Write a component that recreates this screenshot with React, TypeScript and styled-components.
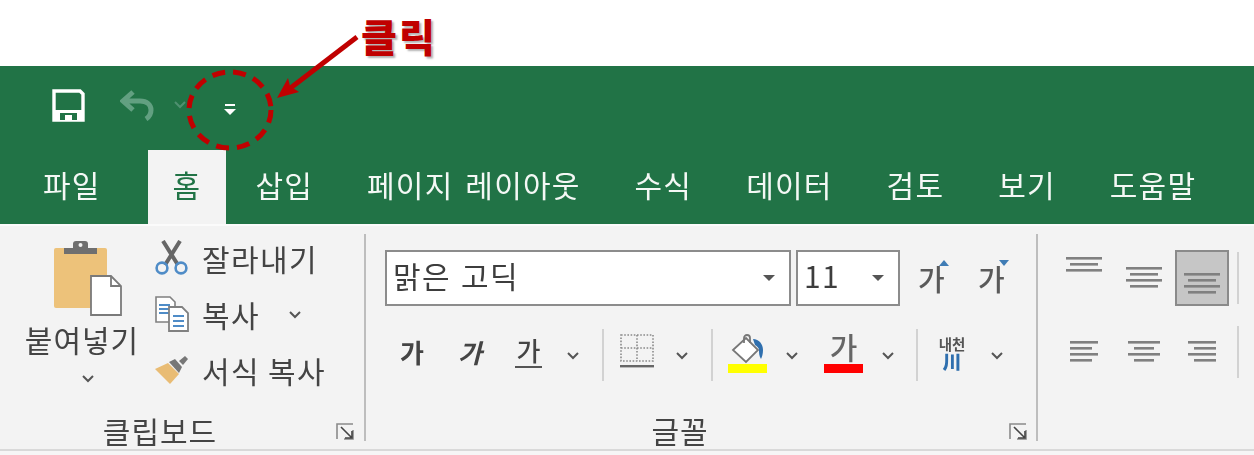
import styled, { createGlobalStyle } from 'styled-components';

const GlobalStyle = createGlobalStyle`
  html, body {
    margin: 0;
    padding: 0;
    background: #ffffff;
  }
  body {
    font-family: "Noto Sans CJK KR", "Noto Sans", sans-serif;
    color: #444444;
  }
`;

const Page = styled.div`
  position: relative;
  width: 1254px;
  height: 455px;
  overflow: hidden;
  background: #fff;
`;

const Blurred = styled.div`
  filter: blur(0.7px);
`;

const TopGap = styled.div`
  height: 66px;
`;

const TitleBar = styled.div`
  height: 84px;
  background: #217346;
  display: flex;
  align-items: center;
  padding-left: 52px;
  box-sizing: border-box;
  padding-bottom: 6px;
`;

const QatSlot = styled.div<{ $width: number; $drop?: number }>`
  width: ${(p) => p.$width}px;
  display: flex;
  align-items: center;
  margin-top: ${(p) => p.$drop ?? 0}px;
`;

const TabBar = styled.div`
  height: 74px;
  background: #217346;
  display: flex;
  align-items: stretch;
  gap: 4px;
  padding-left: 18px;
  box-sizing: border-box;
`;

const Tab = styled.div<{ $active?: boolean }>`
  padding: 0 25px 6px;
  margin-left: ${(p) => (p.$active ? '18px' : '0')};
  display: flex;
  align-items: center;
  justify-content: center;
  font-size: 30px;
  line-height: 1;
  letter-spacing: 1.2px;
  word-spacing: 4px;
  white-space: nowrap;
  color: ${(p) => (p.$active ? '#217346' : '#f4f8f5')};
  background: ${(p) => (p.$active ? '#f3f3f3' : 'transparent')};
`;

const Ribbon = styled.div`
  height: 231px;
  background: #f3f3f3;
  border-top: 2px solid #fbfbfb;
  box-sizing: border-box;
  display: flex;
  box-shadow: inset 0 -4px 0 #f6f6f6, inset 0 -6px 0 #d9d9d9;
`;

const Group = styled.div<{ $width: number }>`
  position: relative;
  width: ${(p) => p.$width}px;
  flex-shrink: 0;
  height: 207px;
  margin-top: 8px;
  box-sizing: border-box;
  border-right: 2px solid #bdbdbd;
`;

const ClipGroup = styled(Group)`
  display: flex;
  padding-left: 24px;
`;

const PasteColumn = styled.div`
  width: 116px;
  display: flex;
  flex-direction: column;
  align-items: center;
  padding-top: 6px;
`;

const PasteIcon = styled.div`
  margin-left: 12px;
  height: 76px;
`;

const PasteLabel = styled.div`
  font-size: 30px;
  line-height: 40px;
  letter-spacing: 1px;
  margin-top: 3px;
  margin-bottom: 15px;
  white-space: nowrap;
`;

const ClipList = styled.div`
  margin-left: 15px;
  display: flex;
  flex-direction: column;
  margin-top: -4px;
`;

const ClipRow = styled.div`
  height: 56px;
  display: flex;
  align-items: center;
`;

const ClipIcon = styled.div`
  width: 47px;
  display: flex;
  align-items: center;
`;

const ClipText = styled.span`
  font-size: 30px;
  line-height: 1;
  letter-spacing: 1.4px;
  white-space: nowrap;
`;

const Chevron = styled.svg<{ $left?: number }>`
  margin-left: ${(p) => p.$left ?? 0}px;
  flex-shrink: 0;
`;

const GroupLabel = styled.div<{ $center: number }>`
  position: absolute;
  left: ${(p) => p.$center}px;
  top: 176px;
  transform: translateX(-50%);
  font-size: 30px;
  line-height: 40px;
  letter-spacing: 1px;
  white-space: nowrap;
`;

const Launcher = styled.svg<{ $right: number }>`
  position: absolute;
  right: ${(p) => p.$right}px;
  top: 188px;
`;

const FontGroup = styled(Group)`
  padding-left: 19px;
`;

const FontRow = styled.div`
  display: flex;
  align-items: center;
  height: 56px;
  margin-top: 16px;
`;

const ToolRow = styled.div`
  display: flex;
  align-items: center;
  height: 54px;
  margin-top: 22px;
  padding-left: 14px;
`;

const Select = styled.div<{ $width: number }>`
  width: ${(p) => p.$width}px;
  height: 56px;
  box-sizing: border-box;
  border: 2px solid #8c8c8c;
  background: #fff;
  display: flex;
  align-items: center;
  justify-content: space-between;
  padding: 0 14px 0 6px;
  margin-right: 5px;
  font-size: 30px;
  letter-spacing: 1.4px;
  word-spacing: 2px;
  color: #3d3d3d;
`;

const SelectText = styled.span`
  line-height: 1;
  margin-top: -6px;
`;

const Caret = styled.span`
  width: 0;
  height: 0;
  border-left: 6px solid transparent;
  border-right: 6px solid transparent;
  border-top: 6px solid #555;
`;

const SizeStep = styled.div<{ $left: number }>`
  position: relative;
  margin-left: ${(p) => p.$left}px;
  font-size: 29px;
  line-height: 1;
  width: 28px;
  font-weight: 500;
  color: #5a5a5a;
`;

const StepMark = styled.span<{ $up?: boolean }>`
  position: absolute;
  right: -3px;
  top: -4px;
  width: 0;
  height: 0;
  border-left: 5px solid transparent;
  border-right: 5px solid transparent;
  ${(p) => (p.$up ? 'border-bottom: 6px solid #3f7cb5;' : 'border-top: 6px solid #3f7cb5;')}
`;

const FaceButton = styled.span<{ $width: number; $left?: number; $italic?: boolean; $under?: boolean; $bold?: boolean }>`
  width: ${(p) => p.$width}px;
  margin-left: ${(p) => p.$left ?? 0}px;
  margin-bottom: 6px;
  font-size: 26px;
  line-height: 1;
  text-align: center;
  font-weight: ${(p) => (p.$bold ? 700 : 500)};
  color: #444;
  font-style: ${(p) => (p.$italic ? 'italic' : 'normal')};
  border-bottom: ${(p) => (p.$under ? '2px solid #555' : '0')};
  padding-bottom: ${(p) => (p.$under ? '3px' : '0')};
`;

const Sep = styled.div<{ $left: number; $right: number }>`
  width: 2px;
  height: 52px;
  background: #d2d2d2;
  margin-left: ${(p) => p.$left}px;
  margin-right: ${(p) => p.$right}px;
  flex-shrink: 0;
`;

const Lifted = styled.div<{ $by: number }>`
  display: flex;
  margin-bottom: ${(p) => p.$by}px;
`;

const ColorButton = styled.div<{ $left?: number }>`
  width: 39px;
  height: 48px;
  margin-left: ${(p) => p.$left ?? 0}px;
  margin-bottom: 12px;
  display: flex;
  flex-direction: column;
  align-items: center;
  justify-content: flex-end;
`;

const ColorText = styled.span`
  font-size: 30px;
  line-height: 36px;
  font-weight: 500;
  color: #666;
`;

const Swatch = styled.div<{ $color: string }>`
  width: 39px;
  height: 9px;
  background: ${(p) => p.$color};
  flex-shrink: 0;
`;

const PhoneticStack = styled.div`
  width: 32px;
  margin-bottom: 6px;
  display: flex;
  flex-direction: column;
  align-items: center;
  font-weight: 700;
`;

const PhoneticTop = styled.div`
  font-size: 14.5px;
  line-height: 17px;
  color: #555;
  white-space: nowrap;
`;

const PhoneticBottom = styled.div`
  font-size: 19px;
  line-height: 18px;
  font-weight: 900;
  color: #2f6fae;
`;

const AlignGroup = styled.div`
  flex: 1;
  margin-top: 8px;
`;

const AlignRow = styled.div<{ $top: number }>`
  display: flex;
  align-items: center;
  height: 56px;
  margin-top: ${(p) => p.$top}px;
  padding-left: 17px;
`;

const AlignCell = styled.div<{ $width: number; $active?: boolean; $align?: string; $inset?: string }>`
  width: ${(p) => p.$width}px;
  height: 56px;
  box-sizing: border-box;
  display: flex;
  justify-content: center;
  align-items: ${(p) => p.$align ?? 'center'};
  padding: ${(p) => p.$inset ?? '0'};
  ${(p) => (p.$active ? 'background: #c6c6c6; border: 2px solid #8a8a8a;' : '')}
`;

const Callout = styled.svg`
  position: absolute;
  left: 0;
  top: 0;
  filter: blur(0.4px);
`;

const CalloutText = styled.div`
  position: absolute;
  left: 361px;
  top: 9px;
  font-size: 39px;
  line-height: 52px;
  font-weight: 900;
  letter-spacing: 2px;
  color: #c00000;
  text-shadow: 2px 2px 2px rgba(0, 0, 0, 0.3);
`;

const ChevronDown = ({ left, color = '#555' }: { left?: number; color?: string }) => (
  <Chevron $left={left} width="14" height="9" viewBox="0 0 14 9">
    <path d="M2 2l5 5 5-5" fill="none" stroke={color} strokeWidth="2" />
  </Chevron>
);

const LauncherIcon = ({ right }: { right: number }) => (
  <Launcher $right={right} width="19" height="18" viewBox="0 0 19 18">
    <path d="M1 17V2h16M17 8v9H8" fill="none" stroke="#8a8a8a" strokeWidth="1.6" />
    <path d="M5 5l11 11M16 9v7H9" fill="none" stroke="#444" strokeWidth="1.6" />
  </Launcher>
);

// lines of the alignment buttons: [x offset, width]
const AlignLines = ({ lines, width }: { lines: number[][]; width: number }) => (
  <svg width={width} height={lines.length * 6} viewBox={`0 0 ${width} ${lines.length * 6}`}>
    {lines.map(([x, w], i) => (
      <rect key={i} x={x} y={i * 6 + 1} width={w} height="2.6" fill="#808080" />
    ))}
  </svg>
);

const SaveIcon = () => (
  <svg width="33" height="33" viewBox="0 0 33 33">
    <path d="M2 2h26l3 3v26H2z" fill="none" stroke="#fff" strokeWidth="3.4" />
    <path d="M2 21h29v10H2z" fill="#fff" />
    <rect x="8" y="24" width="17" height="7" fill="#217346" />
    <rect x="13" y="26" width="7" height="5" fill="#fff" />
  </svg>
);

const UndoIcon = () => (
  <svg width="36" height="32" viewBox="0 0 36 32">
    <path
      d="M13 3L3 12l10 9M4 12h16c7 0 11 4 11 9 0 4-2 7-5 9"
      fill="none"
      stroke="#62a081"
      strokeWidth="5"
    />
  </svg>
);

const CustomizeIcon = () => (
  <svg width="12" height="12" viewBox="0 0 12 12">
    <rect x="1" y="0" width="10" height="2" fill="#fff" />
    <path d="M0 5h12l-6 6z" fill="#fff" />
  </svg>
);

const ClipboardIcon = () => (
  <svg width="68" height="76" viewBox="0 0 68 76">
    <rect x="0" y="8" width="53" height="60" rx="2" fill="#edc27a" />
    <path d="M10 8h9V4a3 3 0 013-3h9a3 3 0 013 3v4h9v6H10z" fill="#6f6f6f" />
    <circle cx="26.5" cy="5" r="2" fill="#f3f3f3" />
    <path d="M37 36h20l10 10v29H37z" fill="#fff" stroke="#7a7a7a" strokeWidth="1.8" />
    <path d="M57 36v10h10" fill="none" stroke="#7a7a7a" strokeWidth="1.8" />
  </svg>
);

const ScissorsIcon = () => (
  <svg width="33" height="36" viewBox="0 0 33 36">
    <path d="M8 1l15 24M25 1L10 25" stroke="#666" strokeWidth="4" fill="none" />
    <circle cx="7" cy="28" r="5.4" fill="none" stroke="#4f8cc7" strokeWidth="2.6" />
    <circle cx="26" cy="28" r="5.4" fill="none" stroke="#4f8cc7" strokeWidth="2.6" />
  </svg>
);

const CopyIcon = () => (
  <svg width="34" height="36" viewBox="0 0 34 36">
    <path d="M1 1h14l5 5v20H1z" fill="#fff" stroke="#808080" strokeWidth="1.6" />
    <path d="M4 9h11M4 13h11M4 17h11" stroke="#4f8cc7" strokeWidth="1.8" />
    <path d="M14 11h13l6 6v18H14z" fill="#fff" stroke="#808080" strokeWidth="1.8" />
    <path d="M18 20h11M18 25h11M18 30h11" stroke="#4f8cc7" strokeWidth="1.8" />
  </svg>
);

const BrushIcon = () => (
  <svg width="34" height="30" viewBox="0 0 34 30">
    <path d="M0 14l13-6 11 11-9 10z" fill="#e9bc74" />
    <path d="M14 7l6-3 7 8-3 6z" fill="#777" />
    <path d="M24 6l6-5 3 3-5 6z" fill="#777" />
  </svg>
);

const BorderIcon = () => (
  <svg width="34" height="35" viewBox="0 0 34 35">
    <path
      d="M1 1h32v26H1zM17 1v26M1 14h32"
      fill="none"
      stroke="#8a8a8a"
      strokeWidth="1.6"
      strokeDasharray="1.6 1.6"
    />
    <rect x="0" y="31" width="34" height="2.4" fill="#666" />
  </svg>
);

const BucketIcon = () => (
  <svg width="34" height="30" viewBox="0 0 34 30">
    <path d="M2 16L15 4l12 12-12 12z" fill="#fff" stroke="#777" strokeWidth="1.8" />
    <path d="M13 9V4a3 3 0 016 0v5" fill="none" stroke="#777" strokeWidth="1.8" />
    <path d="M22 5c6 0 10 5 10 11 0 4-1 7-2 9-2-3-2-6-2-9 0-2-2-4-4-5z" fill="#2f6fae" />
  </svg>
);

const tabs = ['파일', '홈', '삽입', '페이지 레이아웃', '수식', '데이터', '검토', '보기', '도움말'];

const clipRows = [
  { icon: <ScissorsIcon />, label: '잘라내기' },
  { icon: <CopyIcon />, label: '복사', chevron: true },
  { icon: <BrushIcon />, label: '서식 복사' },
];

const fourLines = [[0, 36], [4, 28], [0, 36], [4, 28]];

export default function App() {
  return (
    <Page>
      <GlobalStyle />
      <Blurred>
        <TopGap />
        <TitleBar>
          <QatSlot $width={68}>
            <SaveIcon />
          </QatSlot>
          <QatSlot $width={53}>
            <UndoIcon />
          </QatSlot>
          <QatSlot $width={51} $drop={-2}>
            <ChevronDown color="#4f9070" />
          </QatSlot>
          <QatSlot $width={14} $drop={10}>
            <CustomizeIcon />
          </QatSlot>
        </TitleBar>
        <TabBar>
          {tabs.map((t) => (
            <Tab key={t} $active={t === '홈'}>
              {t}
            </Tab>
          ))}
        </TabBar>
        <Ribbon>
          <ClipGroup $width={366}>
            <PasteColumn>
              <PasteIcon>
                <ClipboardIcon />
              </PasteIcon>
              <PasteLabel>붙여넣기</PasteLabel>
              <ChevronDown left={12} />
            </PasteColumn>
            <ClipList>
              {clipRows.map((r) => (
                <ClipRow key={r.label}>
                  <ClipIcon>{r.icon}</ClipIcon>
                  <ClipText>{r.label}</ClipText>
                  {r.chevron && <ChevronDown left={28} />}
                </ClipRow>
              ))}
            </ClipList>
            <GroupLabel $center={160}>클립보드</GroupLabel>
            <LauncherIcon right={9} />
          </ClipGroup>
          <FontGroup $width={672}>
            <FontRow>
              <Select $width={406}>
                <SelectText>맑은 고딕</SelectText>
                <Caret />
              </Select>
              <Select $width={104}>
                <SelectText>11</SelectText>
                <Caret />
              </Select>
              <SizeStep $left={13}>
                가
                <StepMark $up />
              </SizeStep>
              <SizeStep $left={32}>
                가
                <StepMark />
              </SizeStep>
            </FontRow>
            <ToolRow>
              <FaceButton $width={26} $bold>
                가
              </FaceButton>
              <FaceButton $width={26} $left={32} $bold $italic>
                가
              </FaceButton>
              <FaceButton $width={27} $left={32} $under>
                가
              </FaceButton>
              <ChevronDown left={24} />
              <Sep $left={22} $right={16} />
              <Lifted $by={8}>
                <BorderIcon />
              </Lifted>
              <ChevronDown left={21} />
              <Sep $left={22} $right={15} />
              <ColorButton>
                <BucketIcon />
                <Swatch $color="#ffff00" />
              </ColorButton>
              <ChevronDown left={18} />
              <ColorButton $left={25}>
                <ColorText>가</ColorText>
                <Swatch $color="#ff0000" />
              </ColorButton>
              <ChevronDown left={18} />
              <Sep $left={21} $right={18} />
              <PhoneticStack>
                <PhoneticTop>내천</PhoneticTop>
                <PhoneticBottom>川</PhoneticBottom>
              </PhoneticStack>
              <ChevronDown left={22} />
            </ToolRow>
            <GroupLabel $center={314}>글꼴</GroupLabel>
            <LauncherIcon right={8} />
          </FontGroup>
          <AlignGroup>
            <AlignRow $top={16}>
              <AlignCell $width={58} $align="flex-start" $inset="6px 0 0">
                <AlignLines width={36} lines={[[0, 36], [4, 28], [0, 36]]} />
              </AlignCell>
              <AlignCell $width={62}>
                <AlignLines width={36} lines={fourLines} />
              </AlignCell>
              <AlignCell $width={54} $active $align="flex-end" $inset="0 0 8px">
                <AlignLines width={36} lines={fourLines} />
              </AlignCell>
              <Sep $left={8} $right={0} />
            </AlignRow>
            <AlignRow $top={18}>
              <AlignCell $width={58}>
                <AlignLines width={28} lines={[[0, 28], [0, 22], [0, 28], [0, 22]]} />
              </AlignCell>
              <AlignCell $width={62}>
                <AlignLines width={32} lines={[[0, 32], [6, 20], [0, 32], [6, 20]]} />
              </AlignCell>
              <AlignCell $width={54}>
                <AlignLines width={28} lines={[[0, 28], [6, 22], [0, 28], [6, 22]]} />
              </AlignCell>
              <Sep $left={8} $right={0} />
            </AlignRow>
          </AlignGroup>
        </Ribbon>
      </Blurred>
      <Callout width="1254" height="455" viewBox="0 0 1254 455">
        <ellipse
          cx="230"
          cy="110"
          rx="41"
          ry="38"
          fill="none"
          stroke="#c00000"
          strokeWidth="5"
          strokeDasharray="13 8"
        />
        <path d="M357 37L284 93" stroke="#c00000" strokeWidth="5" fill="none" />
        <path d="M277 98l11-20 2 8 9 6z" fill="#c00000" />
      </Callout>
      <CalloutText>클릭</CalloutText>
    </Page>
  );
}
